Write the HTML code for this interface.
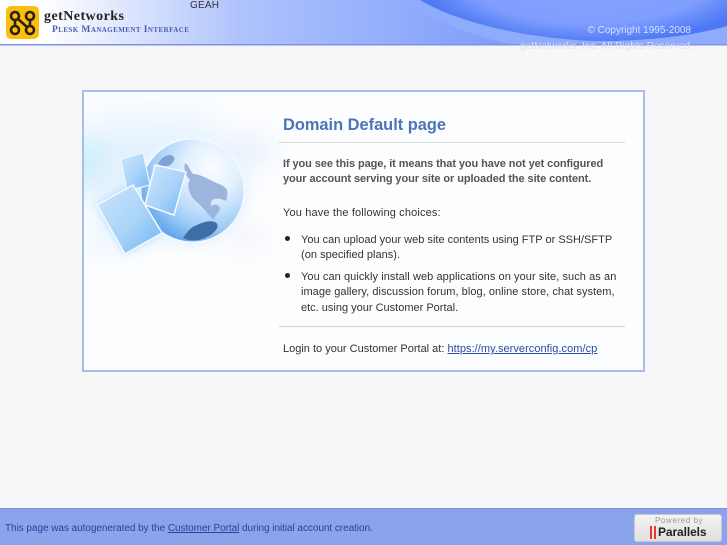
<!DOCTYPE html>
<html><head><meta charset="utf-8"><style>
html,body{margin:0;padding:0;width:727px;height:545px;overflow:hidden;background:#f7f7f7;font-family:"Liberation Sans",sans-serif;}
.a{position:absolute;white-space:nowrap;}
.t{font-size:11px;color:#333;line-height:15px;}
.b{font-weight:bold;color:#555;}
a{color:#2d4aa0;text-decoration:underline;}
</style></head><body>
<svg class="a" style="left:0;top:0" width="727" height="46" viewBox="0 0 727 46">
<defs>
<linearGradient id="h" x1="0" x2="1" y1="0" y2="0"><stop offset="0" stop-color="#fff"/><stop offset=".06" stop-color="#fff"/><stop offset=".33" stop-color="#afc3fc"/><stop offset=".7" stop-color="#7d9dfb"/><stop offset="1" stop-color="#7d9dfb"/></linearGradient>
<radialGradient id="r" gradientUnits="userSpaceOnUse" cx="0" cy="0" r="1" gradientTransform="translate(590 -28) scale(178 72)"><stop offset="0" stop-color="#84a3ff"/><stop offset=".72" stop-color="#7f9efe"/><stop offset="1" stop-color="#4c78f5"/></radialGradient>
</defs>
<rect width="727" height="44" fill="url(#h)"/>
<path d="M400 0C440 24 480 38 510 44H727V26C660 44 520 44 420 0Z" fill="#8fabfb"/>
<path d="M420 0C470 30 560 42 610 41C660 40 700 34 727 26V0Z" fill="url(#r)"/>
<rect y="44" width="727" height="1.5" fill="#7f8fe6"/>
<rect x="6" y="6" width="33" height="33" rx="5" fill="#fcbe0c"/>
<g fill="none" stroke="#2a2110" stroke-width="2.6"><circle cx="15" cy="16" r="4"/><circle cx="30" cy="16" r="4"/><circle cx="15" cy="30" r="4"/><circle cx="30" cy="30" r="4"/><path d="M15 20V26M30 20V26M18 19L27 27"/></g>
</svg>
<div class="a" style="left:44px;top:9px;font:bold 14px/16px 'Liberation Serif',serif;color:#222;letter-spacing:.45px">getNetworks</div>
<div class="a" style="left:52px;top:24px;font:bold 9.5px/13px 'Liberation Serif',serif;color:#4a5cb0;font-variant:small-caps;letter-spacing:.43px">Plesk Management Interface</div>
<div class="a" style="left:190px;top:0;font-size:10px;line-height:12px;color:#333;letter-spacing:.2px">GEAH</div>
<div class="a" style="right:36px;top:25px;font-size:10px;line-height:12px;color:#d6e0ff">© Copyright 1995-2008</div>
<div class="a" style="right:37px;top:41px;font-size:10px;line-height:12px;color:#d9e2ff;letter-spacing:.08px;transform:translateX(3px)">getNetworks, Inc. All Rights Reserved.</div>

<div class="a" style="left:82px;top:90px;width:559px;height:278px;border:2px solid #a9bdea;background:#fcfdfe"></div>
<svg class="a" style="left:84px;top:92px" width="230" height="215" viewBox="84 92 230 215">
<defs>
<radialGradient id="g" cx="212" cy="168" r="78" gradientUnits="userSpaceOnUse"><stop offset="0" stop-color="#fbfdff"/><stop offset=".35" stop-color="#e2f0fe"/><stop offset=".75" stop-color="#a2cef7"/><stop offset="1" stop-color="#66a8ec"/></radialGradient>
<linearGradient id="p" x1="0" x2="1" y1="0" y2="1"><stop offset="0" stop-color="#cde6fb"/><stop offset=".55" stop-color="#a9d3f8"/><stop offset="1" stop-color="#70b4f2"/></linearGradient>
<filter id="bl" x="-50%" y="-80%" width="200%" height="260%"><feGaussianBlur stdDeviation="12"/></filter>
<filter id="s" x="-30%" y="-30%" width="160%" height="160%"><feGaussianBlur stdDeviation="4"/></filter>
</defs>
<g filter="url(#bl)">
<ellipse cx="150" cy="125" rx="75" ry="18" fill="#f1f7fe"/>
<ellipse cx="100" cy="165" rx="50" ry="26" fill="#c8eefd"/>
<ellipse cx="165" cy="185" rx="78" ry="55" fill="#e3f1fd"/>
<ellipse cx="245" cy="150" rx="28" ry="16" fill="#e9f1fb"/>
<ellipse cx="110" cy="240" rx="30" ry="14" fill="#eef7fe"/>
<ellipse cx="245" cy="238" rx="18" ry="9" fill="#f0f2fa"/>
</g>
<circle cx="192" cy="190.5" r="56" fill="#e9f5ff" filter="url(#s)"/>
<circle cx="192.5" cy="190.5" r="52" fill="url(#g)" stroke="#f2f8ff" stroke-width="2"/>
<path d="M185 163C189 165 190 171 193 174C198 174 205 177 212 181C219 184 225 186 227 190C228 194 227 198 226 201C222 199 218 198 214 199C211 201 209 204 212 206C216 203 219 205 220 209C219 213 215 215 214 220C210 217 207 212 203 208C199 203 193 200 191 195C188 189 187 184 190 180C186 176 183 170 185 163Z" fill="#9db4dd"/>
<path d="M183 238C187 232 191 227 197 225C203 222 210 220 215 222C219 224 218 228 215 231C211 236 205 238 199 240C193 241 187 240 183 238Z" fill="#3f6ea6"/>
<path d="M158 164C161 158 165 155 170 155C175 156 176 159 172 163C170 167 163 167 158 164Z" fill="#7fa2d6"/>
<g filter="url(#s)" opacity=".6"><path d="M97 205L133 185L162 233L125 254Z" fill="#7fc0f5"/></g>
<path d="M121 159L143 153L150 185L127 191Z" fill="url(#p)" stroke="#eef7ff" stroke-width="1.2"/>
<path d="M155 165L186 172L174 215L145 205Z" fill="url(#p)" stroke="#f4faff" stroke-width="1.5"/>
<path d="M97 205L133 185L162 233L125 254Z" fill="url(#p)" stroke="#f4faff" stroke-width="1.5"/>
</svg>

<div class="a" style="left:283px;top:116px;font-size:16.4px;font-weight:bold;line-height:19px;color:#4a76b8">Domain Default page</div>
<div class="a" style="left:279px;top:142px;width:346px;height:1px;background:#d9d9d9"></div>
<div class="a t b" style="left:283px;top:157px;letter-spacing:-.09px">If you see this page, it means that you have not yet configured</div>
<div class="a t b" style="left:283px;top:172px;letter-spacing:-.09px">your account serving your site or uploaded the site content.</div>
<div class="a t" style="left:283px;top:206px;letter-spacing:.15px">You have the following choices:</div>
<div class="a" style="left:285px;top:236px;width:5px;height:5px;border-radius:50%;background:#222"></div>
<div class="a t" style="left:301px;top:233px;letter-spacing:.01px">You can upload your web site contents using FTP or SSH/SFTP</div>
<div class="a t" style="left:301px;top:248px;letter-spacing:.03px">(on specified plans).</div>
<div class="a" style="left:285px;top:273px;width:5px;height:5px;border-radius:50%;background:#222"></div>
<div class="a t" style="left:301px;top:270px;letter-spacing:.07px">You can quickly install web applications on your site, such as an</div>
<div class="a t" style="left:301px;top:285px;letter-spacing:.04px">image gallery, discussion forum, blog, online store, chat system,</div>
<div class="a t" style="left:301px;top:301px;letter-spacing:0">etc. using your Customer Portal.</div>
<div class="a" style="left:279px;top:326px;width:346px;height:1px;background:#d2d2d2"></div>
<div class="a t" style="left:283px;top:342px">Login to your Customer Portal at: <a href="#" style="letter-spacing:.05px">https://my.serverconfig.com/cp</a></div>

<div class="a" style="left:0;top:508px;width:727px;height:37px;background:#8aa3ea;border-top:1px solid #7d90e0;box-sizing:border-box"></div>
<div class="a" style="left:5px;top:522px;font-size:10px;line-height:14px;color:#2d3f9e;letter-spacing:-.05px">This page was autogenerated by the <a href="#" style="color:#2d3f9e">Customer Portal</a> during initial account creation.</div>
<div class="a" style="left:634px;top:514px;width:88px;height:28px;box-sizing:border-box;border:1px solid #c4c8d0;border-radius:3px;background:linear-gradient(#f4f4f4,#e0e0e0)"></div>
<div class="a" style="left:655px;top:516px;font-size:8px;line-height:10px;color:#999;letter-spacing:.6px">Powered by</div>
<div class="a" style="left:650px;top:526px;width:2px;height:13px;background:#e33"></div>
<div class="a" style="left:654px;top:526px;width:2px;height:13px;background:#e33"></div>
<div class="a" style="left:658px;top:525px;font-size:12px;font-weight:bold;line-height:15px;color:#222;letter-spacing:-.1px">Parallels</div>
</body></html>
